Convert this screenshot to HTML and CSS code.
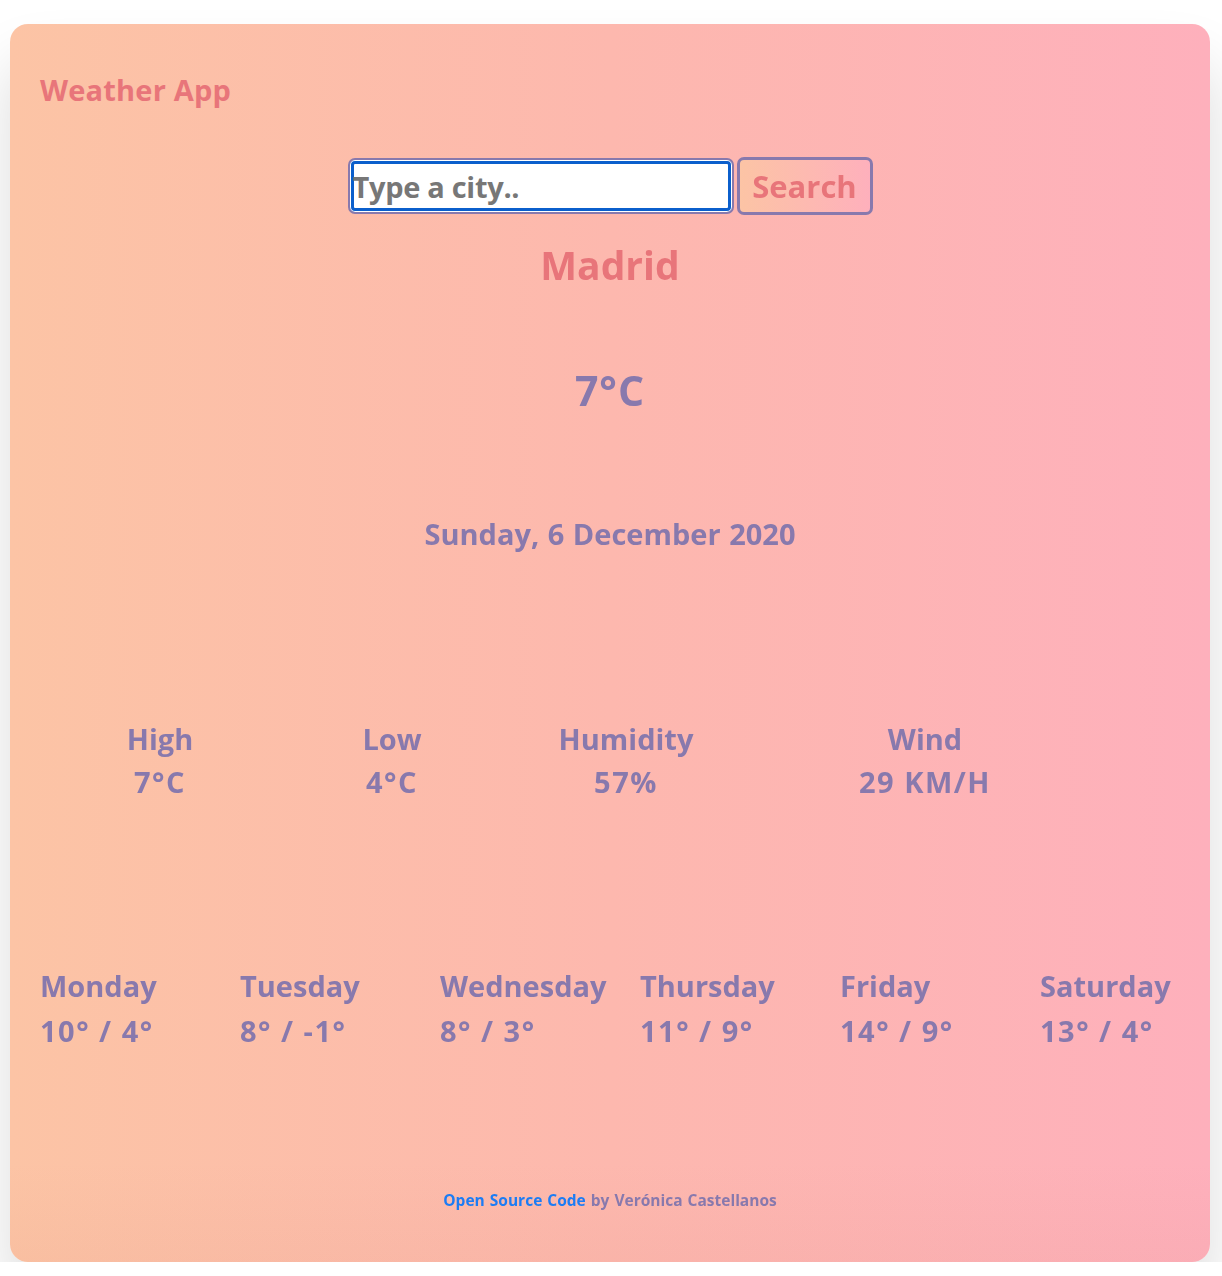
FILE: index.html
```html
<!DOCTYPE html>
<html lang="en">
<head>
<meta charset="utf-8">
<title>Weather App</title>
<link rel="stylesheet" href="styles.css">
</head>
<body>
<div class="card">
  <h1 class="app-title">Weather App</h1>
  <form class="search">
    <input class="search-input" type="text" placeholder="Type a city.." autofocus>
    <button class="search-btn" type="button">Search</button>
  </form>
  <h2 class="city">Madrid</h2>
  <div class="temp">7°C</div>
  <div class="date">Sunday, 6 December 2020</div>
  <div class="stats">
    <div class="stat"><div>High</div><div class="value">7°C</div></div>
    <div class="stat"><div>Low</div><div class="value">4°C</div></div>
    <div class="stat"><div>Humidity</div><div class="value">57%</div></div>
    <div class="stat"><div>Wind</div><div class="value">29 KM/H</div></div>
  </div>
  <div class="forecast">
    <div class="day"><div>Monday</div><div class="value">10° / 4°</div></div>
    <div class="day"><div>Tuesday</div><div class="value">8° / -1°</div></div>
    <div class="day"><div>Wednesday</div><div class="value">8° / 3°</div></div>
    <div class="day"><div>Thursday</div><div class="value">11° / 9°</div></div>
    <div class="day"><div>Friday</div><div class="value">14° / 9°</div></div>
    <div class="day"><div>Saturday</div><div class="value">13° / 4°</div></div>
  </div>
  <footer class="footer"><a href="#">Open Source Code</a> by Verónica Castellanos</footer>
</div>
</body>
</html>
```
FILE: styles.css
```css
html, body {
  margin: 0;
  padding: 0;
  background: #ffffff;
}
body {
  font-family: "Open Sans", "Lato", sans-serif;
  font-weight: 700;
  color: #8879ad;
}
.card {
  width: 1200px;
  box-sizing: border-box;
  margin: 24px auto 0 10px;
  padding: 30px 30px 53px;
  border-radius: 18px;
  background:
    linear-gradient(to bottom, rgba(255,255,255,0) 92%, rgba(210,130,110,0.08) 100%),
    linear-gradient(to right, #fcc4a5 0%, #fdb8ae 50%, #feb0bc 100%);
  box-shadow: 0 40px 60px rgba(0,0,0,0.14);
}
.app-title {
  margin: 18px 0 0;
  font-size: 29px;
  line-height: 36px;
  font-weight: 700;
  color: #e8757a;
  letter-spacing: 0.2px;
}
.search {
  display: flex;
  justify-content: center;
  align-items: center;
  gap: 3px;
  margin-top: 49px;
}
.search-input {
  width: 386px;
  height: 56px;
  margin: 0;
  box-sizing: border-box;
  border: 2px solid #8879ad;
  border-radius: 7px;
  padding: 0 3px;
  background: #ffffff;
  box-shadow: inset 0 0 0 1px #ffffff, inset 0 0 0 4px #0b5fcc;
  font-family: inherit;
  font-weight: 700;
  font-size: 29px;
  letter-spacing: -0.3px;
  color: #555;
  outline: none;
}
.search-input::placeholder {
  color: #777777;
  opacity: 1;
}
.search-btn {
  width: 136px;
  height: 58px;
  margin: 0;
  box-sizing: border-box;
  padding: 0;
  border: 3px solid #8879ad;
  border-radius: 7px;
  background: linear-gradient(to right, #fcc4a5, #feb0bc);
  font-family: inherit;
  font-weight: 700;
  font-size: 31px;
  color: #e8757a;
}
.city {
  margin: 25px 0 0;
  text-align: center;
  font-size: 39px;
  line-height: 50px;
  font-weight: 700;
  color: #e8757a;
}
.temp {
  margin-top: 77px;
  text-align: center;
  font-size: 41px;
  line-height: 46px;
  letter-spacing: 1px;
}
.date {
  margin-top: 103px;
  text-align: center;
  font-size: 29px;
  line-height: 36px;
  word-spacing: 1px;
}
.stats {
  display: grid;
  grid-template-columns: 240px 224px 244px 354px;
  margin-top: 165px;
  font-size: 29px;
  line-height: 43px;
}
.stat {
  text-align: center;
}
.value {
  letter-spacing: 1.5px;
}
.forecast {
  display: grid;
  grid-template-columns: repeat(5, 200px) 1fr;
  margin-top: 160px;
  font-size: 29px;
  line-height: 45px;
}
.footer {
  margin-top: 138px;
  text-align: center;
  font-size: 15.5px;
  line-height: 18px;
  word-spacing: 1px;
}
.footer a {
  color: #1c7cf4;
  text-decoration: none;
}
```
